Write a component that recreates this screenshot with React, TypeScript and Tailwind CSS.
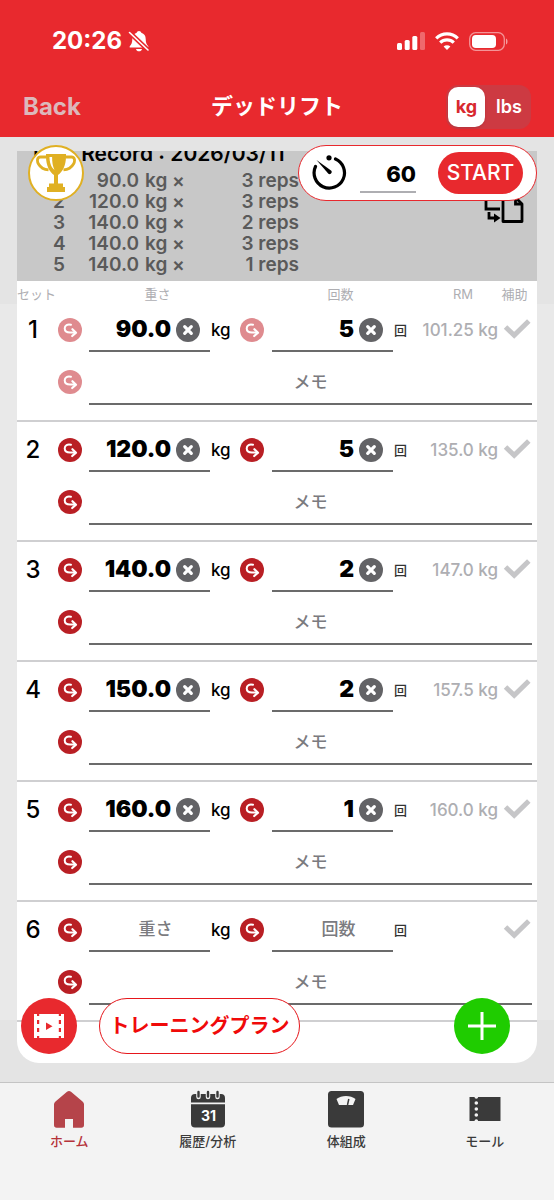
import React, {useState} from "react";
import clsx from "clsx";

type SetRow = { weight: string; reps: string; rm: string };

const initialSets: SetRow[] = [
    {weight: "90.0", reps: "5", rm: "101.25 kg"},
    {weight: "120.0", reps: "5", rm: "135.0 kg"},
    {weight: "140.0", reps: "2", rm: "147.0 kg"},
    {weight: "150.0", reps: "2", rm: "157.5 kg"},
    {weight: "160.0", reps: "1", rm: "160.0 kg"},
    {weight: "", reps: "", rm: ""},
];

const lastRecord = [
    {weight: "90.0", reps: 3},
    {weight: "120.0", reps: 3},
    {weight: "140.0", reps: 2},
    {weight: "140.0", reps: 3},
    {weight: "140.0", reps: 1},
];

const BellOffIcon = () => (
    <svg viewBox="0 0 22 24" className="h-6 w-[22px]" fill="white">
        <path d="M11 2c1.200 0 2 .8 2.300 1.800 2.900.9 4.400 3.200 4.400 6.200 0 4 1 5.500 2.600 7.200v1.300H1.700v-1.300C3.300 15.500 4.300 14 4.300 10c0-3 1.500-5.300 4.400-6.200C9 2.800 9.800 2 11 2Z"/>
        <path d="M8 20h6c-.3 1.500-1.500 2.300-3 2.300S8.300 21.500 8 20Z"/>
        <path d="m1 3 19.500 18.500" stroke="#e8292e" strokeWidth="4.500"/>
        <path d="m1.500 3.500 18.500 17.500" stroke="white" strokeWidth="1.600" strokeLinecap="round"/>
    </svg>
);

const SignalIcon = () => (
    <svg viewBox="0 0 28 18" className="h-[18px] w-7" fill="white">
        <rect x="0" y="11" width="5" height="7" rx="1.500"/>
        <rect x="7.700" y="8" width="5" height="10" rx="1.500"/>
        <rect x="15.300" y="4" width="5" height="14" rx="1.500"/>
        <rect x="23" y="0" width="5" height="18" rx="1.500" opacity=".3"/>
    </svg>
);

const WifiIcon = () => (
    <svg viewBox="0 0 24 18" className="h-[18px] w-6" fill="none" stroke="white" strokeWidth="3.200">
        <path d="M1.200 6.300a15.500 15.500 0 0 1 21.600 0"/>
        <path d="M5.200 10.600a9.800 9.800 0 0 1 13.600 0"/>
        <path d="M12 18 8.600 14.500a4.900 4.900 0 0 1 6.800 0Z" fill="white" stroke="none"/>
    </svg>
);

const BatteryIcon = () => (
    <svg viewBox="0 0 39 19" className="h-[19px] w-[39px]">
        <rect x=".7" y=".7" width="34.600" height="17.600" rx="6" fill="none" stroke="white" strokeOpacity=".5" strokeWidth="1.300"/>
        <rect x="3" y="3" width="24" height="13" rx="3.800" fill="white"/>
        <path d="M37 6.500c2 .6 2 5.400 0 6Z" fill="white" opacity=".55"/>
    </svg>
);

const TrophyIcon = () => (
    <svg viewBox="0 0 40 40" className="size-10" fill="#e0b023">
        <path d="M10 1h20v2.500c0 9-3.500 15.500-8 18.500v8.500h5V34h2v5H11v-5h2v-3.500h5V22c-4.500-3-8-9.500-8-18.500Z"/>
        <path d="M10.500 4H4.500C1 4 .8 8 2.500 11s5 5.500 10 5.800M29.500 4h6c3.500 0 3.700 4 2 7s-5 5.500-10 5.800" fill="none" stroke="#e0b023" strokeWidth="2.800"/>
        <path d="M13.500 4h2.600c0 5 .6 9 2.400 13-3.600-3-5-8-5-13Z" fill="white"/>
    </svg>
);

const TimerIcon = () => (
    <svg viewBox="0 0 36 36" className="size-9" fill="none" stroke="black" strokeWidth="3.200" strokeLinecap="round">
        <path d="M4.500 11.500A15.200 15.200 0 1 0 24.500 4"/>
        <circle cx="18" cy="2.800" r="2.600" fill="black" stroke="none"/>
        <path d="m5.500 5 14.500 10.500c2 1.700-.6 4.800-2.600 3.200Z" fill="black" stroke="none"/>
    </svg>
);

const CopyIcon = () => (
    <svg viewBox="0 0 40 38" className="h-[38px] w-10" fill="none" stroke="black" strokeWidth="2.800">
        <path d="M16 2H2v22h14"/>
        <path d="M5 27v6h6"/>
        <path d="M10 28.500v9l6.500-4.500Z" fill="black" stroke="none"/>
        <path d="M19 13h13l6 6v17.500H19Z" strokeLinejoin="round"/>
        <path d="M31.500 13v6h6"/>
    </svg>
);

const FilmIcon = () => (
    <svg viewBox="0 0 30 24" className="h-6 w-[30px]">
        <path d="M0 0h30v24H0Z" fill="white"/>
        <g fill="#e8292e">
            {[-2, 6, 14, 22].map(y => (
                <React.Fragment key={y}>
                    <rect x="3" y={y} width="2.200" height="4"/>
                    <rect x="24.800" y={y} width="2.200" height="4"/>
                </React.Fragment>
            ))}
            <path d="m12 8.500 6.500 3.700-6.500 3.700Z"/>
        </g>
    </svg>
);

const HomeIcon = () => (
    <svg viewBox="0 0 38 38" className="size-[38px]" fill="#b5444a">
        <path d="M17 1.800a3 3 0 0 1 4 0L32.500 11.500c1 .9 1.500 1.900 1.500 3.200V35a2.700 2.700 0 0 1-2.700 2.700H23V29h-8v8.700H6.700A2.700 2.700 0 0 1 4 35V14.700c0-1.300.5-2.300 1.500-3.200Z"/>
    </svg>
);

const CalendarIcon = () => (
    <svg viewBox="0 0 38 38" className="size-[38px]">
        <path d="M2 12.500V8a4 4 0 0 1 4-4h26a4 4 0 0 1 4 4v4.500ZM2 14.300h34V33.500a4 4 0 0 1-4 4H6a4 4 0 0 1-4-4Z" fill="#3a3a3a"/>
        <path d="M9.500 1v6M19 1v6M28.500 1v6" stroke="#f3f3f3" strokeWidth="4.500" strokeLinecap="round"/>
        <path d="M9.500 2v4.500M19 2v4.500M28.500 2v4.500" stroke="#3a3a3a" strokeWidth="2.400" strokeLinecap="round"/>
        <text x="19.500" y="30.500" textAnchor="middle" fill="white" fontSize="14" fontWeight="700" fontFamily="Inter, sans-serif">31</text>
    </svg>
);

const ScaleIcon = () => (
    <svg viewBox="0 0 38 38" className="size-[38px]">
        <rect x="1" y="1" width="36" height="36.500" rx="3.500" fill="#3a3a3a"/>
        <path d="M9.500 9c5-4 14-4 19 0l-2.500 6H12Z" fill="#f3f3f3"/>
        <path d="m20.500 15 1.300-6" stroke="#3a3a3a" strokeWidth="1.500"/>
    </svg>
);

const TicketIcon = () => (
    <svg viewBox="0 0 38 38" className="size-[38px]">
        <path d="M3.500 7h31v24h-31Z" fill="#3a3a3a"/>
        <g fill="#f3f3f3">
            {[7, 13, 19, 25, 31].map(y => <circle key={y} cx="10.300" cy={y} r="1.800"/>)}
        </g>
    </svg>
);

const CopyDownButton = ({faded, label}: { faded: boolean; label: string }) => (
    <button type="button" aria-label={label}
            className={clsx("flex size-6 items-center justify-center rounded-full", faded ? "bg-[#df8b8f]" : "bg-[#b91f24]")}>
        <svg viewBox="0 0 24 24" className="size-6" fill="none" stroke="white" strokeWidth="2" strokeLinecap="round" strokeLinejoin="round">
            <path d="M13 6.800c-3.500-.8-6.300.4-6.300 3.500 0 2.900 2.500 4.200 5.300 4.200h5"/>
            <path d="m14.400 11.200 3.600 3.500-3.800 3.300" strokeWidth="2.200"/>
        </svg>
    </button>
);

const ClearButton = ({label, onClick}: { label: string; onClick: () => void }) => (
    <button type="button" aria-label={label} onClick={onClick}
            className="absolute top-4 right-[10px] flex size-6 items-center justify-center rounded-full bg-[#636366]">
        <svg viewBox="0 0 24 24" className="size-6" stroke="white" strokeWidth="3.200" strokeLinecap="round">
            <path d="m8.700 8.700 6.600 6.600M15.300 8.700l-6.600 6.600"/>
        </svg>
    </button>
);

const NumberField = ({label, value, placeholder, onChange}: {
    label: string;
    value: string;
    placeholder: string;
    onChange: (v: string) => void
}) => (
    <div className="relative">
        <input type="text" inputMode="decimal" aria-label={label} value={value} placeholder={placeholder}
               onChange={e => onChange(e.target.value)}
               className={clsx(
                   "h-[50px] w-full border-b-2 border-[#6b6b6b] bg-transparent pt-[6px] outline-none placeholder:text-[#7b7b7f]",
                   value ? "pr-[39px] text-right text-[23px] font-black" : "pl-3 text-center text-[17px] font-medium"
               )}/>
        {value && <ClearButton label={`${label}をクリア`} onClick={() => onChange("")}/>}
    </div>
);

const SetItem = ({row, index, onChange}: { row: SetRow; index: number; onChange: (r: SetRow) => void }) => (
    <li className="h-[120px] border-b-2 border-[#cfcfd1]">
        <div className="grid h-[50px] grid-cols-[41px_31px_1fr_30px_32px_1fr_25px_80px_33px] pr-[6px]">
            <span className="w-8 pt-2 text-center text-2xl leading-10 font-medium">{index + 1}</span>
            <div className="pt-4"><CopyDownButton faded={index === 0} label="重さをコピー"/></div>
            <NumberField label={`セット${index + 1} 重さ`} placeholder="重さ" value={row.weight}
                         onChange={weight => onChange({...row, weight})}/>
            <span className="pt-2 pl-px text-[17px] leading-10 font-medium">kg</span>
            <div className="pt-4"><CopyDownButton faded={index === 0} label="回数をコピー"/></div>
            <NumberField label={`セット${index + 1} 回数`} placeholder="回数" value={row.reps}
                         onChange={reps => onChange({...row, reps})}/>
            <span className="pt-2 pl-px text-[13px] leading-10 font-medium text-[#333]">回</span>
            <span className="flex justify-end pt-2 text-[17px] leading-10 font-medium whitespace-nowrap text-[#aeaeb2]">{row.rm}</span>
            <label className="flex h-[50px] items-center justify-end pt-1">
                <input type="checkbox" className="peer sr-only" aria-label="補助"/>
                <svg viewBox="0 0 28 20" className="h-5 w-7 text-[#c6c6c8] peer-checked:text-[#e8292e]" fill="none" stroke="currentColor" strokeWidth="5">
                    <path d="m2.500 8 8.700 8.300L25.800 2"/>
                </svg>
            </label>
        </div>
        <div className="flex h-[53px] pr-[5px] pl-[41px]">
            <div className="w-[31px] shrink-0 pt-[18px]"><CopyDownButton faded={index === 0} label="メモをコピー"/></div>
            <input type="text" aria-label={`セット${index + 1} メモ`} placeholder="メモ"
                   className="min-w-0 flex-1 border-b-2 border-[#6b6b6b] bg-transparent pt-[10px] text-center text-[17px] font-medium outline-none placeholder:text-[#7b7b7f]"/>
        </div>
    </li>
);

const tabs = [
    {label: "ホーム", icon: <HomeIcon/>, active: true},
    {label: "履歴/分析", icon: <CalendarIcon/>, active: false},
    {label: "体組成", icon: <ScaleIcon/>, active: false},
    {label: "モール", icon: <TicketIcon/>, active: false},
];

const App = () => {
    const [sets, setSets] = useState(initialSets);
    const [unit, setUnit] = useState("kg");
    const [rest, setRest] = useState("60");

    const updateSet = (i: number, row: SetRow) => {
        setSets(sets.map((s, n) => (n === i ? row : s)));
    };

    return (
        <div className="flex min-h-screen flex-col font-['Inter','Noto_Sans_CJK_JP',sans-serif] text-black">
            <header className="bg-[#e8292e] text-white">
                <div className="flex h-[76px] items-center justify-between pt-[6px] pr-[46px] pl-[52px]">
                    <div className="flex items-center gap-[6px] text-2xl font-bold">
                        20:26
                        <BellOffIcon/>
                    </div>
                    <div className="flex items-center gap-[10px]">
                        <SignalIcon/>
                        <WifiIcon/>
                        <BatteryIcon/>
                    </div>
                </div>
                <div className="grid h-[61px] grid-cols-[1fr_auto_1fr] items-center px-[23px]">
                    <button type="button" className="justify-self-start text-2xl font-bold text-[#dcb8bb]">Back</button>
                    <h1 className="text-[22px] font-bold">デッドリフト</h1>
                    <fieldset className="flex justify-self-end rounded-xl bg-[#cd3a42] p-[2px] text-lg font-semibold">
                        {["kg", "lbs"].map(u => (
                            <label key={u} className={clsx(
                                "flex h-10 items-center justify-center rounded-[10px]",
                                unit === u ? "w-[37px] bg-white font-bold text-[#d8292e] shadow" : "w-11 pl-1 text-white"
                            )}>
                                <input type="radio" name="unit" className="sr-only" checked={unit === u} onChange={() => setUnit(u)}/>
                                {u}
                            </label>
                        ))}
                    </fieldset>
                </div>
            </header>

            <main className="relative flex flex-1 flex-col bg-[linear-gradient(#e4e4e4_167px,#e9e9e9_167px,#e9e9e9_calc(100%-62px),#e4e4e4_calc(100%-62px))] px-[17px] pt-[14px] pb-[19px]">
                <div className="flex flex-1 flex-col overflow-hidden rounded-b-[22px] bg-white">
                    <section className="relative h-[130px] overflow-hidden bg-[#c8c8c8]">
                        <div className="flex h-full flex-col justify-end pb-[6px] pl-4">
                            <h2 className="shrink-0 text-[21px] leading-8 font-semibold">Last Record : 2026/03/11</h2>
                            {lastRecord.map((r, i) => (
                                <div key={i} className="grid h-[21px] shrink-0 grid-cols-[32px_74px_46px_114px] text-[19px] leading-[21px] font-semibold text-[#5a5a5a]">
                                    <span className="pl-5">{i + 1}</span>
                                    <span className="text-right">{r.weight}</span>
                                    <span className="pl-[6px] whitespace-nowrap">kg ×</span>
                                    <span className="text-right">{r.reps} reps</span>
                                </div>
                            ))}
                        </div>
                        <button type="button" aria-label="記録をコピー" className="absolute right-[13px] bottom-[58px]">
                            <CopyIcon/>
                        </button>
                    </section>

                    <div className="grid h-[21px] grid-cols-[72px_1fr_62px_1fr_25px_80px_33px] pt-[3px] pr-[6px] text-center text-[13px] leading-5 text-[#aeaeb2]">
                        <span className="text-left">セット</span>
                        <span className="pl-4">重さ</span>
                        <span/>
                        <span className="pl-4">回数</span>
                        <span/>
                        <span className="pl-[10px]">RM</span>
                        <span className="whitespace-nowrap">補助</span>
                    </div>

                    <ul>
                        {sets.map((row, i) => (
                            <SetItem key={i} row={row} index={i} onChange={r => updateSet(i, r)}/>
                        ))}
                    </ul>
                </div>

                {/* floating controls */}
                <div className="absolute inset-x-0 top-2 flex items-center justify-between pr-[17px] pl-7">
                    <button type="button" aria-label="ベスト記録"
                            className="flex size-14 items-center justify-center rounded-full border-2 border-[#e0b023] bg-white">
                        <TrophyIcon/>
                    </button>
                    <div className="flex h-14 w-[239px] items-center rounded-full border border-[#e8292e] bg-white pr-[13px] pl-3">
                        <TimerIcon/>
                        <input type="text" inputMode="numeric" aria-label="休憩時間（秒）" value={rest}
                               onChange={e => setRest(e.target.value)}
                               className="mt-1 ml-[13px] h-9 w-14 border-b-2 border-[#aeaeb2] text-right text-[22px] font-extrabold outline-none"/>
                        <button type="button" className="ml-auto h-[42px] w-[85px] rounded-full bg-[#e8292e] text-[21px] font-medium text-white">
                            START
                        </button>
                    </div>
                </div>
                <div className="absolute inset-x-0 bottom-7 flex items-center pr-11 pl-[21px]">
                    <button type="button" aria-label="動画" className="flex size-14 items-center justify-center rounded-full bg-[#e8292e]">
                        <FilmIcon/>
                    </button>
                    <button type="button"
                            className="ml-[22px] h-14 w-[201px] rounded-full border border-[#e6161b] bg-white text-[20px] font-bold whitespace-nowrap text-[#f00a0a]">
                        トレーニングプラン
                    </button>
                    <button type="button" aria-label="セットを追加" className="ml-auto flex size-14 items-center justify-center rounded-full bg-[#1fcc00]">
                        <svg viewBox="0 0 28 28" className="size-7" stroke="white" strokeWidth="3">
                            <path d="M14 0v28M0 14h28"/>
                        </svg>
                    </button>
                </div>
            </main>

            <nav className="grid h-[118px] grid-cols-4 border-t border-[#c4c4c4] bg-[#f3f3f3] pt-[7px]">
                {tabs.map(t => (
                    <a key={t.label} href="#"
                       className={clsx("flex flex-col items-center gap-[3px] text-[13px] leading-5 font-medium", t.active ? "text-[#b5323a]" : "text-[#3a3a3a]")}>
                        {t.icon}
                        {t.label}
                    </a>
                ))}
            </nav>
        </div>
    );
};

export default App;
